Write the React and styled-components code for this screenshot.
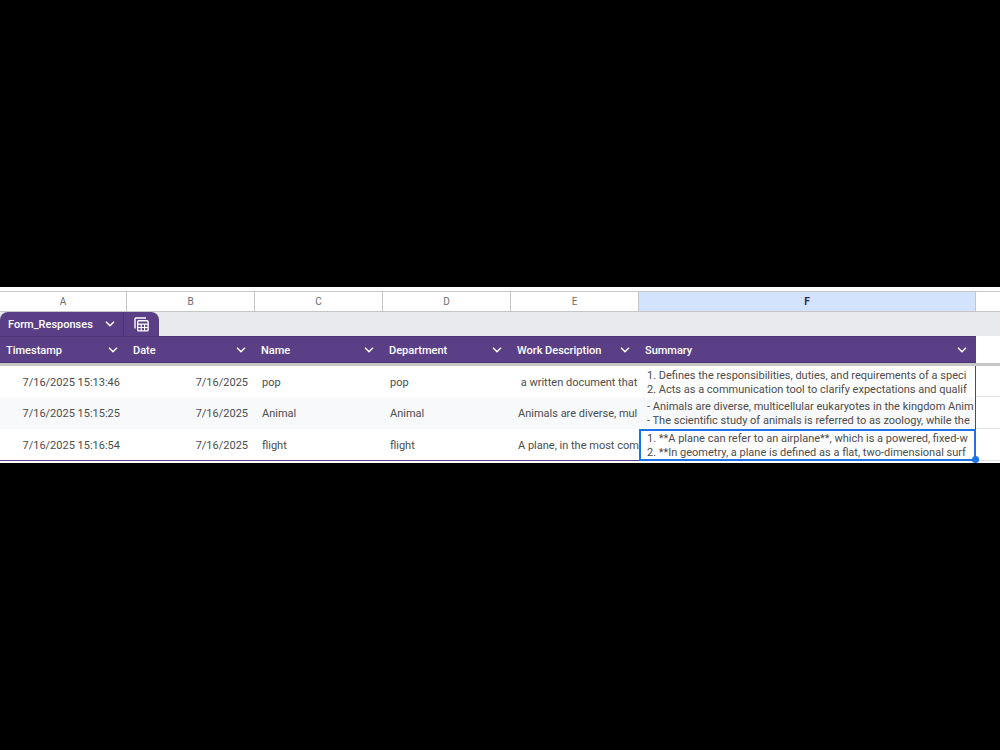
import React from 'react';
import styled, { createGlobalStyle } from 'styled-components';

const columns = [
  { letter: 'A', title: 'Timestamp', width: 127 },
  { letter: 'B', title: 'Date', width: 128 },
  { letter: 'C', title: 'Name', width: 128 },
  { letter: 'D', title: 'Department', width: 128 },
  { letter: 'E', title: 'Work Description', width: 128 },
  { letter: 'F', title: 'Summary', width: 337, selected: true },
];

const responses = [
  {
    timestamp: '7/16/2025 15:13:46',
    date: '7/16/2025',
    name: 'pop',
    department: 'pop',
    work: ' a written document that',
    summary: [
      '1. Defines the responsibilities, duties, and requirements of a speci',
      '2. Acts as a communication tool to clarify expectations and qualif',
    ],
  },
  {
    timestamp: '7/16/2025 15:15:25',
    date: '7/16/2025',
    name: 'Animal',
    department: 'Animal',
    work: 'Animals are diverse, mul',
    summary: [
      '- Animals are diverse, multicellular eukaryotes in the kingdom Anim',
      '- The scientific study of animals is referred to as zoology, while the',
    ],
  },
  {
    timestamp: '7/16/2025 15:16:54',
    date: '7/16/2025',
    name: 'flight',
    department: 'flight',
    work: 'A plane, in the most com',
    summary: [
      '1. **A plane can refer to an airplane**, which is a powered, fixed-w',
      '2. **In geometry, a plane is defined as a flat, two-dimensional surf',
    ],
    selected: true,
  },
];

function Chevron() {
  return (
    <svg width="10" height="6" viewBox="0 0 10 6" fill="none" stroke="currentColor" strokeWidth="1.5" aria-hidden="true">
      <path d="M1 0.8 L5 4.8 L9 0.8" />
    </svg>
  );
}

function TableIcon() {
  return (
    <svg width="15" height="15" viewBox="0 0 15 15" fill="none" stroke="currentColor" aria-hidden="true">
      <path d="M1 11.5 V1.9 Q1 1 1.9 1 H12" strokeWidth="1.4" />
      <rect x="3.7" y="3.7" width="10.4" height="10.2" rx="1" strokeWidth="1.4" />
      <path d="M3.7 7.2 H14 M3.7 10.5 H14 M7.2 7.2 V14 M10.6 7.2 V14" strokeWidth="1.2" />
    </svg>
  );
}

export default function App() {
  return (
    <Page>
      <GlobalStyle />
      <Sheet>
        <Grid>
          <colgroup>
            {columns.map((col) => <col key={col.letter} width={col.width} />)}
            <col />
          </colgroup>
          <thead>
            <tr>
              {columns.map((col) => (
                <Letter key={col.letter} $selected={col.selected}>{col.letter}</Letter>
              ))}
              <LetterEnd />
            </tr>
            <tr>
              <Band colSpan={7}>
                <Tab>
                  <TabName type="button">
                    Form_Responses
                    <Chevron />
                  </TabName>
                  <TabTool type="button" aria-label="Table views">
                    <TableIcon />
                  </TabTool>
                </Tab>
              </Band>
            </tr>
            <tr>
              {columns.map((col) => (
                <Heading key={col.letter} scope="col">
                  <HeadingRow>
                    {col.title}
                    <MenuButton type="button" aria-label={`${col.title} menu`}>
                      <Chevron />
                    </MenuButton>
                  </HeadingRow>
                </Heading>
              ))}
              <HeadingEnd />
            </tr>
          </thead>
          <tbody>
            {responses.map((row) => (
              <Row key={row.timestamp}>
                <Cell $right>{row.timestamp}</Cell>
                <Cell $right>{row.date}</Cell>
                <Cell>{row.name}</Cell>
                <Cell>{row.department}</Cell>
                <Cell>{row.work}</Cell>
                <SummaryCell $selected={row.selected}>
                  <Lines>{row.summary.join('\n')}</Lines>
                  {row.selected && <FillHandle />}
                </SummaryCell>
                <EmptyCell />
              </Row>
            ))}
          </tbody>
        </Grid>
      </Sheet>
    </Page>
  );
}

const GlobalStyle = createGlobalStyle`
  * {
    box-sizing: border-box;
  }
  body {
    margin: 0;
    background: #000;
    font-family: Roboto, "Liberation Sans", sans-serif;
  }
  button {
    border: 0;
    padding: 0;
    background: none;
    color: inherit;
    font: inherit;
  }
`

const Page = styled.main`
  display: flex;
  flex-direction: column;
  justify-content: center;
  min-height: 100vh;
`

const Sheet = styled.section`
  padding: 4px 0 2px;
  background: #fff;
  overflow: hidden;
`

const Grid = styled.table`
  width: 100%;
  table-layout: fixed;
  border-collapse: separate;
  border-spacing: 0;
`

const Letter = styled.th`
  height: 21px;
  padding: 0;
  border: solid #c4c7c5;
  border-width: 1px 1px 1px 0;
  background: ${({ $selected }) => ($selected ? '#d3e3fd' : '#fff')};
  color: ${({ $selected }) => ($selected ? '#1f2a5c' : '#6b6e70')};
  font-size: 10px;
  line-height: 12px;
  font-weight: ${({ $selected }) => ($selected ? 700 : 400)};
`

const LetterEnd = styled.td`
  border: solid #c4c7c5;
  border-width: 1px 0;
`

const Band = styled.td`
  height: 24px;
  padding: 0;
  background: #e8eaed;
`

const Tab = styled.div`
  display: inline-flex;
  height: 24px;
  vertical-align: top;
  border-radius: 8px 8px 0 0;
  background: #5b3f86;
  color: #fff;
`

const TabName = styled.button`
  display: flex;
  align-items: center;
  justify-content: space-between;
  width: 124px;
  padding: 0 8px;
  border-right: 1px solid #4e3574;
  font-size: 11px;
  font-weight: 500;
`

const TabTool = styled.button`
  display: flex;
  align-items: center;
  justify-content: center;
  width: 35px;
`

const Heading = styled.th`
  height: 30px;
  padding: 1px 9px 0 6px;
  border-bottom: 3px solid #c6c6c6;
  background: #5b3f86;
  box-shadow: inset 0 1px #4e3574, inset 0 -1px #4a3270;
  color: #fff;
  font-size: 11px;
  font-weight: 500;
  text-align: left;
`

const HeadingRow = styled.div`
  display: flex;
  align-items: center;
  justify-content: space-between;
`

const MenuButton = styled.button`
  display: flex;
  padding: 2px 0;
`

const HeadingEnd = styled.td`
  border-bottom: 3px solid #c6c6c6;
`

const Cell = styled.td`
  padding: 2px 0 0 7px;
  padding-right: ${({ $right }) => ($right ? '7px' : '0')};
  overflow: hidden;
  color: #4c4c4c;
  font-size: 11px;
  line-height: 14px;
  text-align: ${({ $right }) => ($right ? 'right' : 'left')};
  white-space: pre;
`

const SummaryCell = styled(Cell)`
  position: relative;
  padding-left: 8px;
  overflow: visible;
  border-right: 1px solid #5b3f86;
  outline: ${({ $selected }) => ($selected ? '2px solid #1a73e8' : 'none')};
  outline-offset: -2px;
`

const Lines = styled.div`
  overflow: hidden;
`

const FillHandle = styled.span`
  position: absolute;
  right: -4px;
  bottom: -3px;
  width: 7px;
  height: 7px;
  border-radius: 50%;
  background: #1a73e8;
`

const EmptyCell = styled.td`
  padding: 0;
  border-bottom: 1px solid #e1e1e1;
  background: #fff;
`

const Row = styled.tr`
  height: 32px;

  &:first-child {
    height: 31px;
  }
  &:nth-child(even) {
    background: #f8f9fb;
  }
  &:last-child ${Cell} {
    border-bottom: 1px solid #5b3f86;
  }
`
